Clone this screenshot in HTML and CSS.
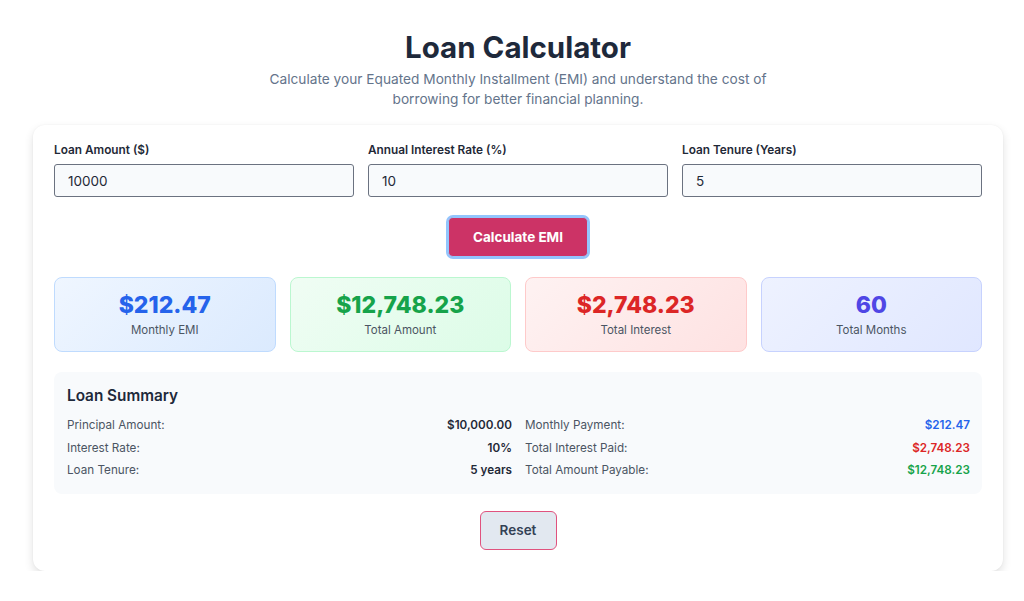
FILE: index.html
```html
<!DOCTYPE html>
<html>
  <head>
    <meta charset="utf-8" />
    <title>Loan Calculator</title>
    <link rel="stylesheet" href="styles.css">
  </head>

  <body>
    <div class="page">
      <header class="header">
        <h1>Loan Calculator</h1>
        <p>Calculate your Equated Monthly Installment (EMI) and understand the cost of borrowing for better financial planning.</p>
      </header>

      <div class="card">
        <div class="fields">
          <div class="field">
            <label for="amount">Loan Amount ($)</label>
            <input type="text" id="amount" class="input" value="10000" />
          </div>
          <div class="field">
            <label for="rate">Annual Interest Rate (%)</label>
            <input type="text" id="rate" class="input" value="10" />
          </div>
          <div class="field">
            <label for="tenure">Loan Tenure (Years)</label>
            <input type="text" id="tenure" class="input" value="5" />
          </div>
        </div>

        <div class="actions">
          <button class="calcBtn">Calculate EMI</button>
        </div>

        <div class="results">
          <div class="result blue">
            <div class="value">$212.47</div>
            <div class="caption">Monthly EMI</div>
          </div>
          <div class="result green">
            <div class="value">$12,748.23</div>
            <div class="caption">Total Amount</div>
          </div>
          <div class="result red">
            <div class="value">$2,748.23</div>
            <div class="caption">Total Interest</div>
          </div>
          <div class="result indigo">
            <div class="value">60</div>
            <div class="caption">Total Months</div>
          </div>
        </div>

        <div class="summary">
          <h2>Loan Summary</h2>
          <div class="summaryGrid">
            <div class="col">
              <div class="row"><span>Principal Amount:</span><b>$10,000.00</b></div>
              <div class="row"><span>Interest Rate:</span><b>10%</b></div>
              <div class="row"><span>Loan Tenure:</span><b>5 years</b></div>
            </div>
            <div class="col">
              <div class="row"><span>Monthly Payment:</span><b class="txtBlue">$212.47</b></div>
              <div class="row"><span>Total Interest Paid:</span><b class="txtRed">$2,748.23</b></div>
              <div class="row"><span>Total Amount Payable:</span><b class="txtGreen">$12,748.23</b></div>
            </div>
          </div>
        </div>

        <div class="actions reset">
          <button class="resetBtn">Reset</button>
        </div>
      </div>
    </div>
  </body>
</html>
```

FILE: styles.css
```css
html {
  font-family: Inter, "Noto Sans", sans-serif;
}

body {
  margin: 0;
  padding-left: 12px;
  background: #fff;
  color: #1e293b;
}

.page {
  width: 970px;
  margin: 0 auto;
  padding-top: 29px;
}

.header {
  text-align: center;
}

.header h1 {
  margin: 0;
  font-size: 29.5px;
  font-weight: 700;
  color: #1e293b;
  line-height: 36px;
}

.header p {
  width: 540px;
  margin: 4px auto 0;
  font-size: 13.7px;
  line-height: 20px;
  color: #64748b;
}

.card {
  margin-top: 16px;
  padding: 18px 21px 21px;
  background: #fff;
  border-radius: 12px;
  box-shadow: 0 4px 10px rgba(0, 0, 0, 0.12), 0 0 2px rgba(0, 0, 0, 0.05);
}

.fields {
  display: grid;
  grid-template-columns: repeat(3, 1fr);
  gap: 14px;
}

.field label {
  display: block;
  font-size: 11.8px;
  font-weight: 600;
  color: #1f2937;
  margin-bottom: 7px;
}

.input {
  box-sizing: border-box;
  width: 100%;
  height: 33px;
  padding: 0 13px;
  border: 1px solid #6b7280;
  border-radius: 3px;
  background: #f8fafc;
  font-family: inherit;
  font-size: 13.5px;
  color: #1f2937;
}

.actions {
  display: flex;
  justify-content: center;
  margin-top: 18px;
}

.calcBtn {
  width: 144px;
  height: 44px;
  border: 2px solid #93c5fd;
  border-radius: 7px;
  background: #cc3366;
  background-clip: padding-box;
  box-shadow: inset 0 0 0 1px #93c5fd;
  font-family: inherit;
  font-size: 13.5px;
  font-weight: 700;
  color: #fff;
}

.results {
  display: grid;
  grid-template-columns: repeat(4, 1fr);
  gap: 14px;
  margin-top: 18px;
}

.result {
  height: 75px;
  box-sizing: border-box;
  border: 1px solid;
  border-radius: 8px;
  text-align: center;
  padding-top: 12px;
}

.value {
  font-size: 23px;
  font-weight: 800;
  line-height: 30px;
}

.caption {
  margin-top: 3px;
  font-size: 11.5px;
  color: #4b5563;
}

.blue {
  background: linear-gradient(135deg, #eff6ff, #dbeafe);
  border-color: #bfdbfe;
}
.blue .value { color: #2563eb; }

.green {
  background: linear-gradient(135deg, #f0fdf4, #dcfce7);
  border-color: #bbf7d0;
}
.green .value { color: #16a34a; }

.red {
  background: linear-gradient(135deg, #fef2f2, #fee2e2);
  border-color: #fecaca;
}
.red .value { color: #dc2626; }

.indigo {
  background: linear-gradient(135deg, #eef2ff, #e0e7ff);
  border-color: #c7d2fe;
}
.indigo .value { color: #4f46e5; }

.summary {
  margin-top: 20px;
  padding: 14px 12px 12px 13px;
  background: #f8fafc;
  border-radius: 8px;
}

.summary h2 {
  margin: 0 0 8px;
  font-size: 15.3px;
  font-weight: 600;
  color: #1e293b;
  line-height: 20px;
}

.summaryGrid {
  display: grid;
  grid-template-columns: 1fr 1fr;
  gap: 13px;
}

.row {
  display: flex;
  justify-content: space-between;
  font-size: 11.7px;
  line-height: 22.5px;
  color: #4b5563;
}

.row b {
  font-weight: 600;
  color: #1f2937;
}

.row b.txtBlue { color: #2563eb; }
.row b.txtRed { color: #dc2626; }
.row b.txtGreen { color: #16a34a; }

.reset {
  margin-top: 17px;
}

.resetBtn {
  width: 77px;
  height: 39px;
  border: 1.5px solid #e0527e;
  border-radius: 6px;
  background: #e2e8f0;
  font-family: inherit;
  font-size: 13.5px;
  font-weight: 600;
  color: #334155;
}
```
